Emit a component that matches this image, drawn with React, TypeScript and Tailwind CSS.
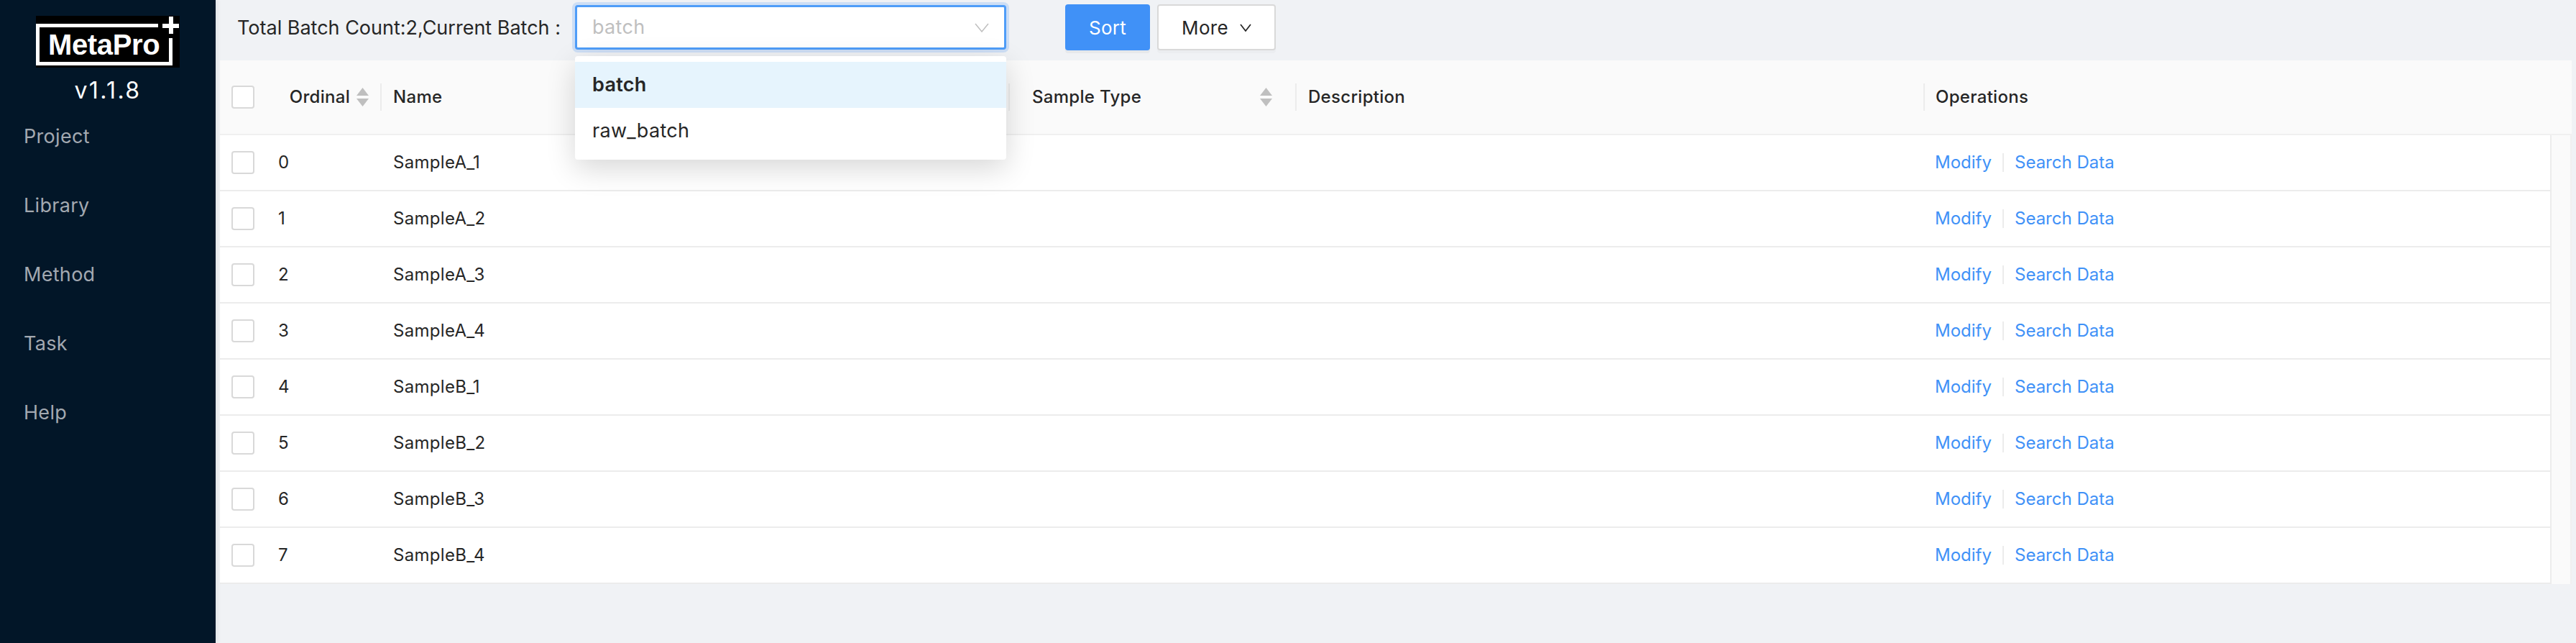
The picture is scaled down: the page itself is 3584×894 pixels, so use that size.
const font = "font-['Inter','Liberation_Sans',sans-serif]";

const samples = [
  "SampleA_1",
  "SampleA_2",
  "SampleA_3",
  "SampleA_4",
  "SampleB_1",
  "SampleB_2",
  "SampleB_3",
  "SampleB_4",
];

const navItems = ["Project", "Library", "Method", "Task", "Help"];

function Logo() {
  return (
    <svg width="200" height="72" viewBox="0 0 200 72" className="block">
      <rect width="200" height="72" fill="#000" />
      <path d="M170 13.5H2.5V66.5H187.5V31" fill="none" stroke="#fff" strokeWidth="5" />
      <path d="M188 1V25M176 14H199" fill="none" stroke="#fff" strokeWidth="6" />
      <text x="17" y="54" fill="#fff" fontFamily="Liberation Sans" fontWeight="700" fontSize="40" textLength="156">
        MetaPro
      </text>
    </svg>
  );
}

function SortIcon() {
  return (
    <svg width="17" height="26" viewBox="0 0 17 26" className="block shrink-0">
      <path d="M8.5 0L17 11H0Z" fill="#bfbfbf" />
      <path d="M8.5 26L0 15H17Z" fill="#bfbfbf" />
    </svg>
  );
}

function Chevron({ w, h, color, sw }: { w: number; h: number; color: string; sw: number }) {
  return (
    <svg width={w} height={h} viewBox={`0 0 ${w} ${h}`} className="block shrink-0">
      <path d={`M1 1L${w / 2} ${h - 1}L${w - 1} 1`} fill="none" stroke={color} strokeWidth={sw} />
    </svg>
  );
}

function Checkbox() {
  return <div className="w-[32px] h-[32px] bg-white border-2 border-[#d9d9d9] rounded-[4px]" />;
}

function Sep() {
  return <div className="w-[2px] h-[38px] bg-[#ececec] shrink-0" />;
}

export default function App() {
  return (
    <div className={`${font} flex w-[3584px] h-[894px] overflow-hidden bg-[#f0f2f5] text-[24px] tracking-[0.3px] text-[#262626]`}>
      <aside className="relative z-20 w-[300px] shrink-0 bg-[#021628] shadow-[2px_0_6px_rgba(0,21,41,0.08)]">
        <div className="pt-[22px] pl-[50px]">
          <Logo />
        </div>
        <div className="mt-[12px] text-center text-[32px] leading-[40px] tracking-[2.4px] text-white">v1.1.8</div>
        <nav className="-mt-[4px] flex flex-col">
          {navItems.map((n) => (
            <div key={n} className="h-[96px] pl-[33px] flex items-center text-[27px] text-[#a3a9b1]">
              {n}
            </div>
          ))}
        </nav>
      </aside>

      <main className="flex-1 pl-[6px] pr-[6px]">
        <div className="relative h-[84px] flex items-center">
          <span className="ml-[24px] w-[470px] text-[27px] leading-none tracking-normal -mt-[8px]">
            Total Batch Count:2,Current Batch :
          </span>
          <div className="-mt-[8px] w-[600px] h-[62px] bg-white border-[3px] border-[#4f9df8] rounded-[4px] shadow-[0_0_0_4px_rgba(64,145,247,0.2)] flex items-center justify-between pl-[21px] pr-[21px] text-[27px] text-[#bfbfbf]">
            <span>batch</span>
            <Chevron w={20} h={13} color="#bfbfbf" sw={1.5} />
          </div>
          <button className="-mt-[8px] ml-[82px] w-[118px] h-[64px] bg-[#4091f7] rounded-[4px] text-white text-[26px] shadow-[0_4px_0_rgba(0,0,0,0.04)]">
            Sort
          </button>
          <button className="-mt-[8px] ml-[10px] w-[165px] h-[64px] bg-white border-2 border-[#d9d9d9] rounded-[4px] text-[26px] flex items-center justify-center gap-[16px] shadow-[0_4px_0_rgba(0,0,0,0.02)]">
            More
            <Chevron w={16} h={11} color="#262626" sw={1.75} />
          </button>

          {/* open select menu */}
          <div className="absolute z-10 left-[494px] top-[78px] w-[600px] h-[144px] py-[8px] bg-white rounded-[4px] shadow-[0_12px_40px_rgba(0,0,0,0.16)] text-[27px]">
            <div className="h-[64px] pl-[24px] flex items-center bg-[#e6f4fd] font-semibold">batch</div>
            <div className="h-[64px] pl-[24px] flex items-center">raw_batch</div>
          </div>
        </div>

        <section>
          <div className="h-[104px] flex items-center bg-[#fafafa] border-b-2 border-[#f0f0f0] font-[450]">
            <div className="w-[225px] shrink-0 flex items-center pl-[16px]">
              <Checkbox />
              <span className="ml-[49px] w-[94px]">Ordinal</span>
              <SortIcon />
              <span className="ml-[16px]">
                <Sep />
              </span>
            </div>
            <div className="w-[874px] shrink-0 flex items-center pl-[16px]">
              <span className="flex-1">Name</span>
              <Sep />
            </div>
            <div className="w-[399px] shrink-0 flex items-center pl-[31px]">
              <span className="flex-1">Sample Type</span>
              <SortIcon />
              <span className="ml-[32px]">
                <Sep />
              </span>
            </div>
            <div className="w-[874px] shrink-0 flex items-center pl-[16px]">
              <span className="flex-1">Description</span>
              <Sep />
            </div>
            <div className="pl-[15px]">Operations</div>
          </div>

          <div className="bg-[#fafafa] border-r-2 border-[#f0f0f0] pr-[26px]">
            {samples.map((s, i) => (
              <div key={s} className="h-[78px] flex items-center bg-white border-b-2 border-r-2 border-[#ececec]">
                <div className="w-[81px] shrink-0 pl-[16px]">
                  <Checkbox />
                </div>
                <div className="w-[160px] shrink-0">{i}</div>
                <div className="w-[2145px] shrink-0">{s}</div>
                <div className="flex items-center text-[#4091f7] tracking-normal">
                  <span className="w-[94px]">Modify</span>
                  <div className="w-[2px] h-[26px] bg-[#ececec] mr-[15px]" />
                  <span>Search Data</span>
                </div>
              </div>
            ))}
          </div>
        </section>
      </main>
    </div>
  );
}
